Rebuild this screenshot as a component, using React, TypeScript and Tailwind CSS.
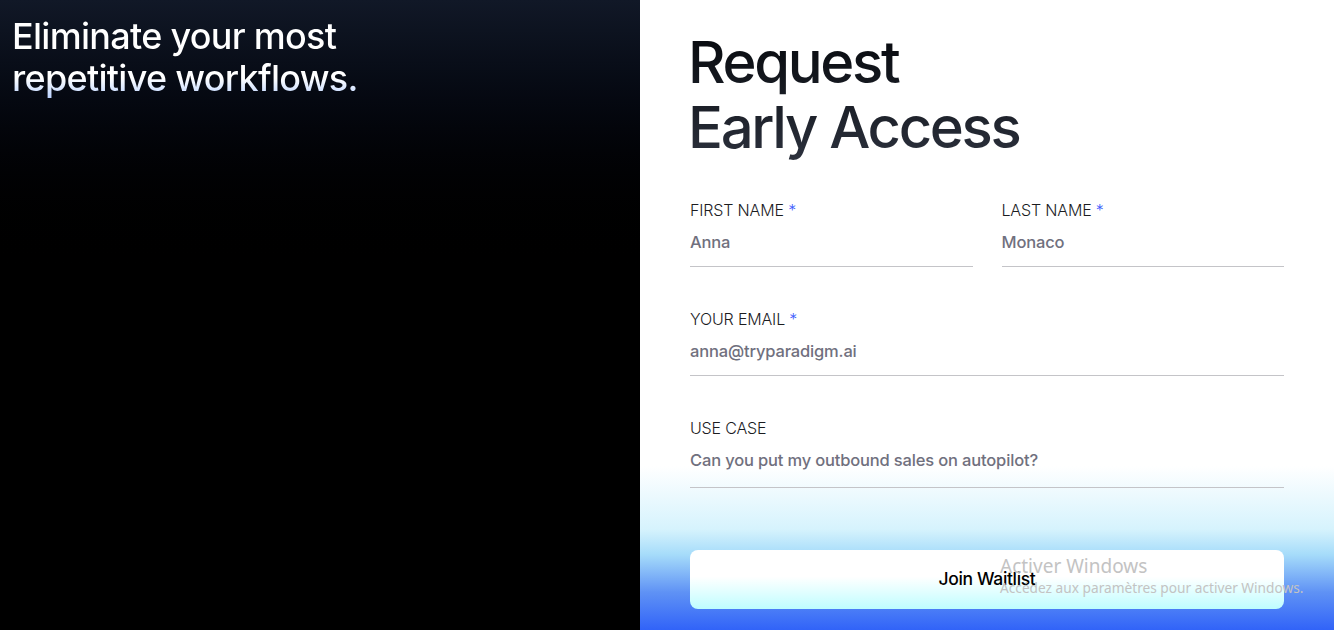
import React from 'react';

const font = { fontFamily: 'Inter, "Noto Sans", sans-serif' };

function Field({ label, value, required, pb = 'pb-[12px]' }: { label: string; value: string; required?: boolean; pb?: string }) {
  return (
    <div className={`flex flex-col border-b border-[#c4c4c8] ${pb}`}>
      <label className="text-[16px] leading-[20px] font-light tracking-[-0.01em] text-[#1c1c1f]">
        {label}
        {required && <span className="text-[#3b5bfd]"> *</span>}
      </label>
      <div className="mt-[10px] text-[16.5px] leading-[24px] font-medium tracking-[-0.01em] text-[#70707e]">{value}</div>
    </div>
  );
}

export default function App() {
  return (
    <div className="relative flex w-full h-[630px] overflow-hidden" style={font}>
      {/* Left panel */}
      <div className="w-[640px] shrink-0 h-full bg-gradient-to-b from-[#111827] to-black to-45% px-3 pt-[15px]">
        <h2 className="text-[36px] leading-[42px] tracking-[-0.02em] font-medium bg-gradient-to-b from-white from-75% to-[#b6cfff] bg-clip-text text-transparent">
          Eliminate your most
          <br />
          repetitive workflows.
        </h2>
      </div>

      {/* Right panel */}
      <div className="flex-1 h-full bg-[linear-gradient(to_bottom,#ffffff_74%,#d6f3fd_84%,#a6dcfa_88%,#5f92f5_94%,#3163f8_100%)] px-[50px] pt-[30px]">
        <h1 className="text-[58px] leading-[65px] tracking-[-0.04em] font-medium bg-gradient-to-b from-[#07090d] to-[#2c313d] bg-clip-text text-transparent -ml-[2px]">
          Request
          <br />
          Early Access
        </h1>

        <form className="mt-[40px] flex flex-col gap-[42px]" onSubmit={(e) => e.preventDefault()}>
          <div className="grid grid-cols-2 gap-[29px]">
            <Field label="FIRST NAME" value="Anna" required />
            <Field label="LAST NAME" value="Monaco" required />
          </div>
          <Field label="YOUR EMAIL" value="anna@tryparadigm.ai" required />
          <Field label="USE CASE" value="Can you put my outbound sales on autopilot?" pb="pb-[15px]" />

          <button
            type="submit"
            className="mt-[20px] h-[59px] w-full rounded-lg bg-gradient-to-b from-white from-45% to-[#bdfdff] text-[17.5px] font-medium tracking-[-0.02em] text-black"
          >
            Join Waitlist
          </button>
        </form>
      </div>

      {/* OS activation watermark */}
      <div className="absolute left-[1000px] top-[554px] pointer-events-none text-[#c3c3c3]" style={{ fontFamily: '"Noto Sans", "Open Sans", sans-serif' }}>
        <div className="text-[19px] leading-[24px]">Activer Windows</div>
        <div className="text-[13.7px] leading-[18px] mt-[1px]">Accédez aux paramètres pour activer Windows.</div>
      </div>
    </div>
  );
}
